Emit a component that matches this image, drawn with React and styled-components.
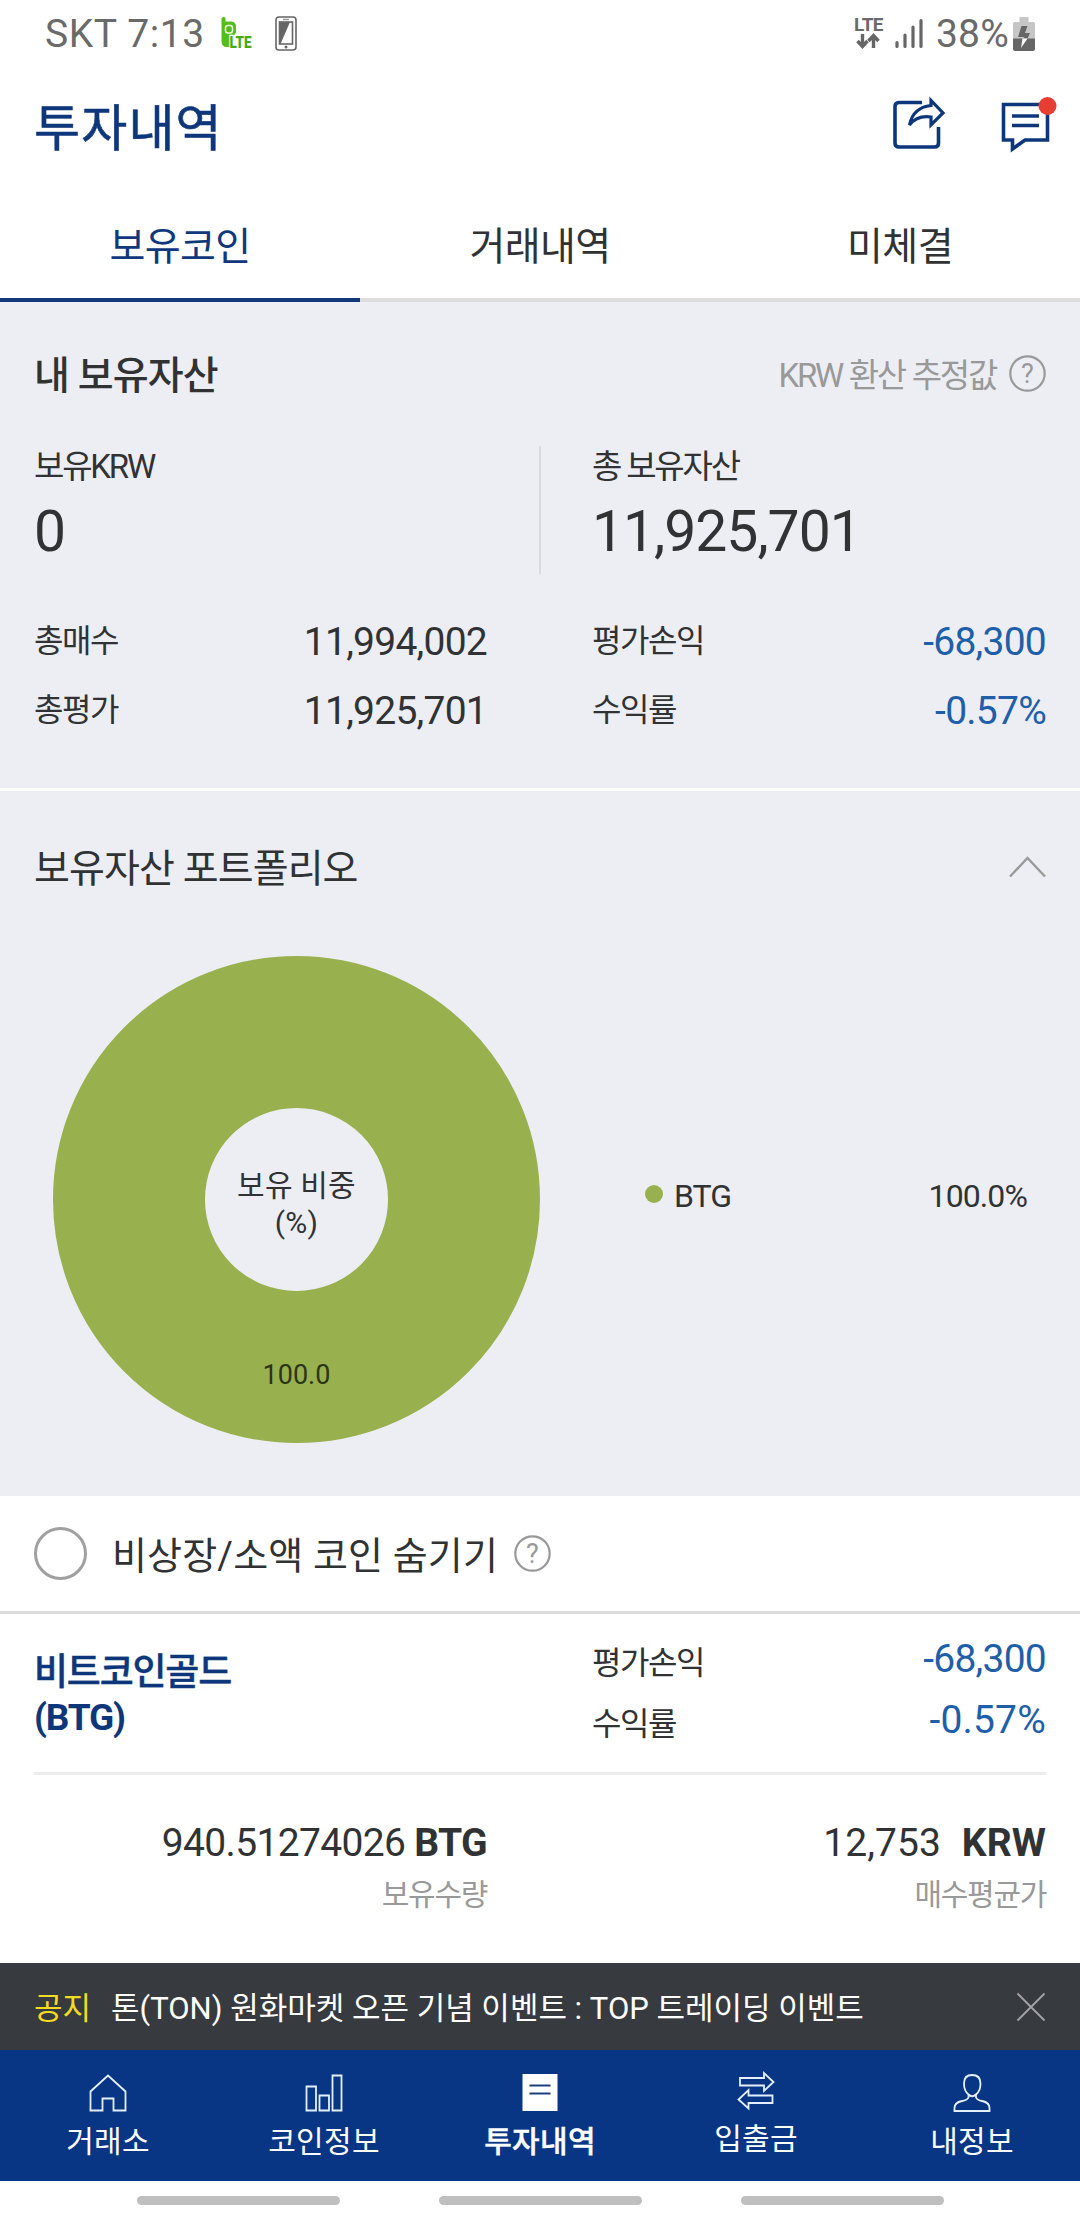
import styled, { createGlobalStyle } from 'styled-components';

const GlobalStyle = createGlobalStyle`
  * {
    box-sizing: border-box;
  }
  body {
    margin: 0;
    background: #fff;
    color: #303234;
    font-family: Roboto, 'Noto Sans CJK KR', sans-serif;
    line-height: 1.2;
  }
  svg {
    display: block;
    flex-shrink: 0;
    overflow: visible;
  }
`;

const Screen = styled.div`
  width: 1080px;
  height: 2220px;
  display: flex;
  flex-direction: column;
  overflow: hidden;
  white-space: nowrap;
`;

/* ---------- status bar ---------- */

const StatusBar = styled.div`
  height: 67px;
  display: flex;
  align-items: center;
  justify-content: space-between;
  padding: 0 45px 0 45px;
  color: #6a6a6a;
  font-size: 39px;
  line-height: 48px;
  letter-spacing: 0.6px;
`;
const StatusGroup = styled.div`
  display: flex;
  align-items: center;
`;
const Carrier = styled.span`
  width: 175px;
`;
const Battery = styled.span`
  margin-left: 13px;
  margin-right: 4px;
  letter-spacing: 0.2px;
`;
const Network = styled.div`
  width: 33px;
  height: 36px;
  margin-right: 10px;
  display: flex;
  flex-direction: column;
  align-items: center;
  font-size: 19px;
  line-height: 17px;
  font-weight: 700;
  letter-spacing: -0.6px;
`;

/* ---------- header ---------- */

const Header = styled.header`
  height: 123px;
  display: flex;
  align-items: center;
  justify-content: space-between;
  padding: 0 23px 0 34px;
`;
const Title = styled.h1`
  margin: 0;
  color: #0e377b;
  font-size: 50px;
  font-weight: 400;
  letter-spacing: 1.2px;
  -webkit-text-stroke: 0.6px #0e377b;
`;
const HeaderIcons = styled.div`
  display: flex;
  gap: 53px;
  margin-top: -7px;
`;
const Tabs = styled.nav`
  height: 112px;
  display: flex;
`;
const Tab = styled.a`
  flex: 1;
  padding-top: 6px;
  display: flex;
  align-items: center;
  justify-content: center;
  border-bottom: 4px solid ${(props) => (props.$active ? '#10387a' : '#dcdcdc')};
  color: ${(props) => (props.$active ? '#10387a' : '#303234')};
  font-size: 39px;
  letter-spacing: -0.6px;
`;

/* ---------- assets ---------- */

const Assets = styled.section`
  height: 486px;
  padding: 38px 34px 0;
  background: #edeef4;
`;
const AssetsHead = styled.div`
  height: 72px;
  display: flex;
  align-items: center;
  justify-content: space-between;
`;
const SectionTitle = styled.h2`
  margin: 0;
  font-size: 39px;
  font-weight: ${(props) => props.$weight || 400};
  letter-spacing: -0.9px;
`;
const Estimate = styled.div`
  display: flex;
  align-items: center;
  gap: 13px;
  color: #999;
  font-size: 33px;
  letter-spacing: -2.3px;
  word-spacing: 1px;

  svg {
    margin-top: -6px;
  }
`;
const Totals = styled.div`
  height: 128px;
  margin-top: 34px;
  display: flex;
`;
const Total = styled.div`
  width: ${(props) => (props.$wide ? '507px' : 'auto')};
  margin-right: ${(props) => (props.$wide ? '51px' : 0)};
  border-right: ${(props) => (props.$wide ? '2px solid #d9dade' : 0)};
`;
const TotalLabel = styled.div`
  line-height: 42px;
  font-size: 33px;
  letter-spacing: -2.2px;
`;
const TotalValue = styled.div`
  line-height: 87px;
  font-size: 57px;
  letter-spacing: -1px;
`;
const Stats = styled.div`
  margin-top: 33px;
  display: grid;
  grid-template-columns: 453px 454px;
  column-gap: 105px;
`;
const Stat = styled.div`
  height: ${(props) => props.$height || 69}px;
  display: flex;
  align-items: center;
  justify-content: space-between;
`;
const StatLabel = styled.span`
  font-size: 32px;
  letter-spacing: -1.4px;
`;
const StatValue = styled.span`
  padding-top: 2px;
  color: ${(props) => (props.$loss ? '#1f5ea8' : 'inherit')};
  font-size: 39px;
  letter-spacing: ${(props) => props.$spacing || '-0.75px'};
`;

/* ---------- portfolio ---------- */

const Portfolio = styled.section`
  height: 705px;
  margin-top: 3px;
  background: #edeef4;
`;
const PortfolioHead = styled.div`
  height: 157px;
  padding: 0 34px;
  display: flex;
  align-items: center;
  justify-content: space-between;

  svg {
    margin-top: -6px;
  }
`;
const PortfolioBody = styled.div`
  display: flex;
  padding: 8px 53px 0;
`;
const Donut = styled.div`
  width: 487px;
  height: 487px;
  border: 152px solid #98b14e;
  border-radius: 50%;
  display: flex;
  flex-direction: column;
  align-items: center;
  font-size: 30px;
  line-height: 37px;
`;
const DonutHole = styled.div`
  height: 249px;
  flex-shrink: 0;
  padding-top: 59px;
  text-align: center;
  letter-spacing: 0.2px;
`;
const DonutValue = styled.div`
  color: #2d3518;
  font-size: 27px;
`;
const Legend = styled.div`
  flex: 1;
  height: 480px;
  margin-left: 105px;
  display: flex;
  align-items: center;
  font-size: 32px;
  letter-spacing: -0.9px;
`;
const LegendDot = styled.span`
  width: 18px;
  height: 18px;
  margin: -4px 11px 0 0;
  border-radius: 50%;
  background: #98b14e;
`;
const LegendShare = styled.span`
  margin-left: auto;
`;

/* ---------- coin list ---------- */

const Filter = styled.div`
  height: 118px;
  padding: 0 34px;
  display: flex;
  align-items: center;
  border-bottom: 3px solid #dcdcdc;
`;
const Radio = styled.span`
  width: 53px;
  height: 53px;
  border: 3px solid #a0a0a0;
  border-radius: 50%;
`;
const FilterLabel = styled.span`
  margin: 6px 16px 0 25px;
  font-size: 38px;
  letter-spacing: 0.15px;
`;
const Coin = styled.div`
  height: 161px;
  margin: 0 34px;
  padding-top: 14px;
  display: flex;
  justify-content: space-between;
  border-bottom: 3px solid #ececec;
`;
const CoinName = styled.h3`
  margin: 22px 0 0;
  color: #0e377b;
  font-size: 37px;
  line-height: 45px;
  font-weight: 500;
  letter-spacing: -1.2px;
  -webkit-text-stroke: 0.4px #0e377b;
`;
const CoinCode = styled.span`
  display: block;
  font-weight: 700;
  -webkit-text-stroke: 0;
`;
const CoinStats = styled.div`
  width: 454px;

  ${StatLabel} {
    margin-top: 10px;
  }
`;
const Amounts = styled.div`
  height: 188px;
  padding: 43px 34px 0;
  display: grid;
  grid-template-columns: 453px 454px;
  column-gap: 105px;
  text-align: right;
`;
const Amount = styled.div`
  line-height: 50px;
  font-size: 39px;
  letter-spacing: ${(props) => props.$spacing};

  b {
    margin-left: ${(props) => props.$gap || 0};
  }
`;
const AmountLabel = styled.div`
  color: #999;
  font-size: 30px;
  line-height: 53px;
  letter-spacing: -1.3px;
`;

/* ---------- notice and bottom nav ---------- */

const Notice = styled.div`
  height: 87px;
  padding: 5px 34px 0;
  display: flex;
  align-items: center;
  background: #373a3f;
  color: #fff;
  font-size: 31px;

  svg {
    margin-top: -5px;
    margin-left: auto;
  }
`;
const NoticeTag = styled.span`
  width: 77px;
  color: #f2dc22;
`;
const BottomNav = styled.nav`
  height: 131px;
  display: flex;
  background: #083685;
  color: #fff;
`;
const NavItem = styled.a`
  flex: 1;
  padding-top: ${(props) => (props.$raised ? '21px' : '24px')};
  display: flex;
  flex-direction: column;
  align-items: center;
  font-size: 30px;
  line-height: 60px;
  font-weight: ${(props) => (props.$active ? 500 : 400)};
  letter-spacing: 0.3px;
  -webkit-text-stroke: ${(props) => (props.$active ? '0.4px #fff' : 0)};
`;
const Gestures = styled.div`
  height: 39px;
  padding-top: 15px;
  display: flex;
  justify-content: center;
  gap: 99px;
`;
const Pill = styled.span`
  width: 203px;
  height: 9px;
  border-radius: 5px;
  background: #bfbfbf;
`;

/* ---------- icons ---------- */

const PhoneSvg = styled.svg`
  margin-left: 22px;
`;

// green handset with the LTE mark
const HandsetIcon = () => (
  <svg width='33' height='36' viewBox='0 0 33 36'>
    <path
      d='M1.500 2V25Q1.500 31 7 31H10V20H12Q16 19 16 15.500V10.500Q16 6 11.500 5.500H5.500V2Q3.500 0 1.500 2Z'
      fill='#54bd1a'
    />
    <rect x='5.500' y='9.500' width='7' height='7.500' rx='2.500' fill='none' stroke='#eafbe0' strokeWidth='1.500' />
    <text
      x='9.500'
      y='31.500'
      textLength='22'
      lengthAdjust='spacingAndGlyphs'
      fontSize='17'
      fontWeight='900'
      fill='#45ac18'
      stroke='#fff'
      strokeWidth='2.500'
      paintOrder='stroke'
      letterSpacing='0'
    >
      LTE
    </text>
  </svg>
);

const PhoneIcon = () => (
  <PhoneSvg width='22' height='35' viewBox='0 0 22 35'>
    <rect x='1' y='1' width='20' height='33' rx='3' fill='#fff' stroke='#666' strokeWidth='1.6' />
    <rect x='4.5' y='6' width='13' height='22' fill='none' stroke='#666' strokeWidth='1.6' />
    <path d='M4.500 6h10.500L5.500 28h-1z' fill='#666' />
    <path d='M8 3.500h6' stroke='#999' strokeWidth='1.5' />
    <circle cx='11' cy='31' r='1.500' fill='#666' />
  </PhoneSvg>
);

const DataArrows = () => (
  <svg width='24' height='16' viewBox='0 0 24 16' fill='none' stroke='#666' strokeWidth='3.400'>
    <path d='M6.500 1v12M1.500 8l5 5.500 5-5.500M17.500 15V3M12.500 8l5-5.500 5 5.500' />
  </svg>
);

const SignalIcon = () => (
  <svg width='28' height='31' viewBox='0 0 28 31' stroke='#666' strokeWidth='3.200' strokeLinecap='round'>
    <path d='M2 28.500v-4M10 28.500V17M18 28.500V9M26 28.500V2.500' />
  </svg>
);

const BatteryIcon = () => (
  <svg width='22' height='34' viewBox='0 0 22 34'>
    <path d='M6.500 0h9v5h5q1.500 0 1.500 1.500V22H0V6.500Q0 5 1.500 5h5z' fill='#c6c6c6' />
    <path d='M0 21.500h22V32q0 2-2 2H2q-2 0-2-2z' fill='#666' />
    <path d='M8.500 9h6l-2.500 7h5l-2.500 5.500h-4l.5-1.500H5z' fill='#666' />
    <path d='M9.500 21.500h5L8 31z' fill='#fff' />
  </svg>
);

const ShareIcon = () => (
  <svg width='53' height='54' viewBox='0 0 53 54' fill='none' stroke='#0e377b' strokeWidth='3.600'>
    <path d='M29 6.500H6Q2 6.500 2 10.500V47Q2 51 6 51H41.500Q45.500 51 45.500 47V31' />
    <path d='M16.500 29Q20 11.500 38 9.500V4.500L50 17 38 29V21Q24 19 16.500 29Z' strokeWidth='3.200' />
  </svg>
);

const ChatIcon = () => (
  <svg width='58' height='58' viewBox='0 0 58 58' fill='none' stroke='#0e377b' strokeWidth='3.600'>
    <path d='M4.500 8.500H48.500V44H26L13.500 53V44H4.500Z' />
    <path d='M13 20H40M13 29.500H40' />
    <circle cx='48.500' cy='10' r='9' fill='#e83d33' stroke='none' />
  </svg>
);

const HelpIcon = () => (
  <svg width='37' height='37' viewBox='0 0 37 37'>
    <circle cx='18.500' cy='18.500' r='17.200' fill='none' stroke='#999' strokeWidth='2.200' />
    <text x='18.500' y='28' textAnchor='middle' fontSize='27' letterSpacing='0' fill='#999'>
      ?
    </text>
  </svg>
);

const ChevronIcon = () => (
  <svg width='37' height='22' viewBox='0 0 37 22' fill='none' stroke='#999' strokeWidth='2.400'>
    <path d='M1 20.500L18.500 2 36 20.500' />
  </svg>
);

const CloseIcon = () => (
  <svg width='30' height='30' viewBox='0 0 30 30' stroke='#a2a3a5' strokeWidth='1.800'>
    <path d='M1.500 1.500l27 27M28.500 1.500l-27 27' />
  </svg>
);

const NavSvg = (props) => (
  <svg
    width='38'
    height='38'
    viewBox='0 0 38 38'
    fill='none'
    stroke='#e4f0ff'
    strokeWidth='1.800'
  >
    {props.children}
  </svg>
);

const navItems = [
  { label: '거래소', icon: <path d='M1.500 36.500V17.500L19 1.500 36.500 17.500V36.500H24.500V24.500H13.500V36.500Z' /> },
  {
    label: '코인정보',
    icon: <path d='M1.500 12.500h9.500v24H1.500zM14.500 21.500H24v15h-9.500zM27.500 1.500H36.500v35h-9z' />,
  },
  {
    label: '투자내역',
    active: true,
    icon: (
      <>
        <path d='M1.500 0h35v37h-35z' fill='#fff' stroke='none' />
        <path d='M8.500 11.500h21M8.500 19.500h21' stroke='#1d3f7c' strokeWidth='2.200' />
      </>
    ),
  },
  {
    label: '입출금',
    raised: true,
    icon: (
      <path d='M3 7H27V2L36.500 11 27 20V14.500H3ZM35.500 24.500H11.500V19L1.500 28.500 11.500 37.500V32H35.500Z' />
    ),
  },
  {
    label: '내정보',
    icon: (
      <path d='M15.500 20.500Q11 17 11 9.500 11 1 19 1 27.500 1 27.500 9.500 27.500 17 23 20.500V23.500Q24 26 29 27 36.500 28.500 36.500 34V37H1.500V34Q1.500 28.500 9 27 14.500 26 15.500 23.500ZM15.500 20.500Q19 24 23 20.500' />
    ),
  },
];

const App = () => {
  return (
    <>
      <GlobalStyle />
      <Screen>
        <StatusBar>
          <StatusGroup>
            <Carrier>SKT 7:13</Carrier>
            <HandsetIcon />
            <PhoneIcon />
          </StatusGroup>
          <StatusGroup>
            <Network>
              LTE
              <DataArrows />
            </Network>
            <SignalIcon />
            <Battery>38%</Battery>
            <BatteryIcon />
          </StatusGroup>
        </StatusBar>

        <Header>
          <Title>투자내역</Title>
          <HeaderIcons>
            <ShareIcon />
            <ChatIcon />
          </HeaderIcons>
        </Header>

        <Tabs>
          <Tab $active>보유코인</Tab>
          <Tab>거래내역</Tab>
          <Tab>미체결</Tab>
        </Tabs>

        <Assets>
          <AssetsHead>
            <SectionTitle $weight={500}>내 보유자산</SectionTitle>
            <Estimate>
              KRW 환산 추정값
              <HelpIcon />
            </Estimate>
          </AssetsHead>
          <Totals>
            <Total $wide>
              <TotalLabel>보유KRW</TotalLabel>
              <TotalValue>0</TotalValue>
            </Total>
            <Total>
              <TotalLabel>총 보유자산</TotalLabel>
              <TotalValue>11,925,701</TotalValue>
            </Total>
          </Totals>
          <Stats>
            <Stat>
              <StatLabel>총매수</StatLabel>
              <StatValue>11,994,002</StatValue>
            </Stat>
            <Stat>
              <StatLabel>평가손익</StatLabel>
              <StatValue $loss>-68,300</StatValue>
            </Stat>
            <Stat>
              <StatLabel>총평가</StatLabel>
              <StatValue>11,925,701</StatValue>
            </Stat>
            <Stat>
              <StatLabel>수익률</StatLabel>
              <StatValue $loss>-0.57%</StatValue>
            </Stat>
          </Stats>
        </Assets>

        <Portfolio>
          <PortfolioHead>
            <SectionTitle>보유자산 포트폴리오</SectionTitle>
            <ChevronIcon />
          </PortfolioHead>
          <PortfolioBody>
            <Donut>
              <DonutHole>
                보유 비중
                <br />
                (%)
              </DonutHole>
              <DonutValue>100.0</DonutValue>
            </Donut>
            <Legend>
              <LegendDot />
              BTG
              <LegendShare>100.0%</LegendShare>
            </Legend>
          </PortfolioBody>
        </Portfolio>

        <Filter>
          <Radio />
          <FilterLabel>비상장/소액 코인 숨기기</FilterLabel>
          <HelpIcon />
        </Filter>

        <Coin>
          <CoinName>
            비트코인골드
            <CoinCode>(BTG)</CoinCode>
          </CoinName>
          <CoinStats>
            <Stat $height={61}>
              <StatLabel>평가손익</StatLabel>
              <StatValue $loss>-68,300</StatValue>
            </Stat>
            <Stat $height={61}>
              <StatLabel>수익률</StatLabel>
              <StatValue $loss $spacing='0.2px'>
                -0.57%
              </StatValue>
            </Stat>
          </CoinStats>
        </Coin>
        <Amounts>
          <div>
            <Amount $spacing='-0.65px'>
              940.51274026 <b>BTG</b>
            </Amount>
            <AmountLabel>보유수량</AmountLabel>
          </div>
          <div>
            <Amount $spacing='0.1px' $gap='11px'>
              12,753 <b>KRW</b>
            </Amount>
            <AmountLabel>매수평균가</AmountLabel>
          </div>
        </Amounts>

        <Notice>
          <NoticeTag>공지</NoticeTag>
          톤(TON) 원화마켓 오픈 기념 이벤트 : TOP 트레이딩 이벤트
          <CloseIcon />
        </Notice>
        <BottomNav>
          {navItems.map((item) => (
            <NavItem key={item.label} $active={item.active} $raised={item.raised}>
              <NavSvg>{item.icon}</NavSvg>
              {item.label}
            </NavItem>
          ))}
        </BottomNav>
        <Gestures>
          <Pill />
          <Pill />
          <Pill />
        </Gestures>
      </Screen>
    </>
  );
};

export default App;
